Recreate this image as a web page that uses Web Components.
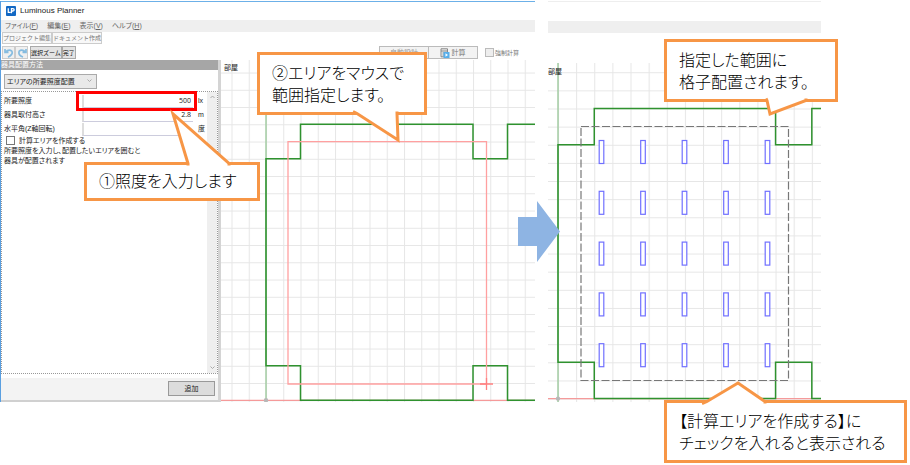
<!DOCTYPE html>
<html lang="ja">
<head>
<meta charset="utf-8">
<title>Luminous Planner</title>
<style>
body{margin:0;background:#fff;color:#222;font-family:"Liberation Sans","Noto Sans CJK JP",sans-serif}
</style>
</head>
<body>
<guide-page></guide-page>
<script>
const define = (name, html, setup) => {
  const t = document.createElement('template');
  t.innerHTML = '<style>*{box-sizing:border-box}button,input,select{font:inherit;color:inherit;margin:0;border-radius:0}</style>' + html;
  customElements.define(name, class extends HTMLElement {
    connectedCallback() {
      if (this.shadowRoot) return;
      this.attachShadow({mode: 'open'}).append(t.content.cloneNode(true));
      if (setup) setup(this, this.shadowRoot);
    }
  });
};

define('call-out', `<style>
:host{display:block;position:absolute;z-index:3;background:#fff;border:3px solid #f79646;padding:6px 12px;
font:16px/22px "Noto Sans CJK JP",sans-serif;font-weight:300;font-feature-settings:"palt";color:#000;white-space:nowrap}
svg{position:absolute;left:-3px;top:-3px;width:1px;height:1px;overflow:visible}
path{fill:#fff;stroke:#f79646;stroke-width:3;stroke-linejoin:miter}
</style><svg aria-hidden="true"><path/></svg><slot></slot>`,
(el, r) => r.querySelector('path').setAttribute('d', el.getAttribute('tail')));

define('title-bar', `<style>
:host{display:flex;align-items:center;gap:4px;height:20px;padding-left:5px;border-top:1px solid #6cb0e8;font:8px/12px "Liberation Sans",sans-serif;color:#222}
svg{width:10px;height:10px}
</style><svg viewBox="0 0 11 11" aria-hidden="true"><rect width="11" height="11" rx="1" fill="#1268c4"/><path d="M2.5 2.5v4.5h2.6M6 8V3h1.6q1.4 0 1.4 1.2T7.6 5.5H6" fill="none" stroke="#fff" stroke-width="1.4"/></svg><slot></slot>`);

define('menu-bar', `<style>
:host{display:flex;align-items:center;gap:9px;height:12px;padding-left:4px;background:#efefef;color:#666;font-size:7px;line-height:10px}
button{border:0;background:none;padding:0;white-space:nowrap;font-feature-settings:"palt"}
</style><button>ファイル(<u>F</u>)</button><button>編集(<u>E</u>)</button><button>表示(<u>V</u>)</button><button>ヘルプ(<u>H</u>)</button>`);

define('tool-rows', `<style>
:host{display:flex;flex-direction:column;gap:2px;height:28px;font-size:6px;line-height:10px}
.row{display:flex;height:12px;padding-left:1px}
.second{height:13px}
button{display:flex;align-items:center;justify-content:center;border:1px solid #aaa;background:#e3e3e3;padding:0;white-space:nowrap;color:#111}
.tab{background:#f8f8f8;border-color:#ccc;color:#777}
.ico{width:13px;background:#f0f0f0;border-color:#ccc}
.ico svg{width:10px;height:10px;flex:none}
.ico path{fill:none;stroke:#86bce0;stroke-width:1.7}
.gap{width:2px}
.right{display:flex;margin-left:auto;padding-right:16px}
.wide{width:50px;background:#f3f3f3;border-color:#bbb;color:#999;gap:1px;font-size:7px}
.wide+.wide{margin-left:-1px;color:#777}
.wide svg{width:10px;height:10px}
label{display:flex;align-items:center;gap:1px;margin-left:7px;color:#777}
input{appearance:none;width:9px;height:9px;border:1px solid #bbb;background:#eee}
</style>
<div class="row"><button class="tab">プロジェクト編集</button><button class="tab">ドキュメント作成</button></div>
<div class="row second">
<button class="ico" aria-label="元に戻す"><svg viewBox="0 0 10 10"><path d="M1 1v3.4h3.5M1.3 4.2Q5 .6 7.8 3.2Q9.5 6.3 4 9.2"/></svg></button>
<button class="ico" aria-label="やり直し"><svg viewBox="0 0 10 10"><path d="M9 1v3.4H5.5M8.7 4.2Q5 .6 2.2 3.2Q.8 7.4 6 9"/></svg></button>
<span class="gap"></span><button>選択ズーム</button><button>完了</button>
<div class="right"><button class="wide">自動設計</button>
<button class="wide"><svg viewBox="0 0 10 10" aria-hidden="true"><path d="M1 .8h6.5v8H1zM1 3h6.500M2.500 5h2M2.500 7h2" fill="#eee" stroke="#888"/><rect x="3.500" y="4" width="6" height="6" fill="#58aeea"/><path d="M5.500 5.300v3.400L8 7z" fill="#fff"/></svg>計算</button>
<label><input type="checkbox">強制計算</label></div></div>`);

define('side-panel', `<style>
:host{display:flex;flex-direction:column;width:220px;flex:none;border-right:3px solid #d4d4d4;border-bottom:2px solid #d0d0d0;font-size:7px;line-height:10px;font-feature-settings:"palt"}
h2{margin:0;font-size:7px;line-height:10px;font-weight:400;height:10px;background:#a6a6a6;color:#fff}
select{appearance:none;display:block;width:93px;height:15px;margin:4px 3px 2px;padding:0 2px;border:1px solid #aaa;background:#e9e9e9}
.pick{position:relative;width:max-content}
.pick svg{position:absolute;right:8px;top:9px;width:5px;height:4px}
.list{flex:1;display:flex;justify-content:space-between;border:1px dotted #999}
.fields{padding:2px 1px 2px 2px;flex:1}
.f{display:grid;grid-template-columns:73px 1fr 8px;align-items:center;height:14px;column-gap:5px}
.f input{width:100%;height:13px;border:0;border-left:2px solid #ddd;border-bottom:1px solid #ccd;text-align:right;padding:0 2px;background:#fff;font-family:"Open Sans","Noto Sans CJK JP",sans-serif}
.c{display:flex;align-items:center;gap:4px;padding-left:2px;height:9px}
.c input{appearance:none;width:9px;height:9px;border:1px solid #777;background:#fff}
p{margin:1px 0 0}
.bar{width:10px;background:#efefef;display:flex;flex-direction:column;justify-content:space-between;align-items:center;padding:3px 0}
.bar svg{width:5px;height:4px}
path{fill:none;stroke:#aaa}
footer{display:flex;justify-content:flex-end;margin-top:4px;background:#f3f3f3;padding:3px 3px 4px}
footer button{width:47px;height:15px;border:1px solid #999;background:#dcdcdc;padding:0}
</style><h2>器具配置方法</h2>
<div class="pick"><select aria-label="器具配置方法"><option>エリアの所要照度配置</option></select><svg viewBox="0 0 5 4"><path d="M.5.5l2 2 2-2"/></svg></div>
<div class="list"><div class="fields">
<label class="f"><span>所要照度</span><input value="500"><span>lx</span></label>
<label class="f"><span>器具取付高さ</span><input value="2.8"><span>m</span></label>
<label class="f"><span>水平角(Z軸回転)</span><input value=""><span>度</span></label>
<label class="c"><input type="checkbox">計算エリアを作成する</label>
<p>所要照度を入力し、配置したいエリアを囲むと<br>器具が配置されます</p></div>
<div class="bar"><svg viewBox="0 0 5 4"><path d="M.5 3l2-2 2 2"/></svg><svg viewBox="0 0 5 4"><path d="M.5.5l2 2 2-2"/></svg></div></div>
<footer><button>追加</button></footer>`);

/* Floor plan: ox/oy is the origin corner, step the grid pitch; the room is 16 cells high. */
define('floor-plan', `<style>
:host{display:block;position:relative;overflow:hidden;min-width:0;font-size:7px;line-height:10px;color:#111}
svg{display:block;width:100%}
span{position:absolute;top:3px;left:3px}
:host([kind=lamps]) span{left:0;top:4px}
</style><svg></svg><span>部屋</span>`,
(el, r) => {
  const n = k => +el.getAttribute(k), ox = n('ox'), oy = n('oy'), s = n('step'), h = n('h'), id = 'grid';
  const X = i => ox + i * s, Y = i => oy - i * s;
  let o = `<defs><pattern id="${id}" x="${ox}" y="${oy}" width="${s}" height="${s}" patternUnits="userSpaceOnUse"><path d="M.5 0V${s}M0 .5H${s}" stroke="#e6e6e6" stroke-width="1"/></pattern></defs>
  <rect width="100%" height="100%" fill="url(#${id})"/>
  <path d="M0 ${oy}H2000" stroke="#f59a9a" stroke-width="1.300"/><path d="M${ox} 0V${h}" stroke="#a3cda3" stroke-width="1.500"/>
  <path fill="none" stroke="#2f922f" stroke-width="1.500" d="M2000 ${Y(16)}H${X(14)}V${Y(14)}H${X(12)}V${Y(16)}H${X(2)}V${Y(14)}H${X(0)}V${Y(2)}H${X(2)}V${Y(0)}H${X(12)}V${Y(2)}H${X(14)}V${Y(0)}H2000"/>
  <circle cx="${ox}" cy="${oy}" r="2.200" fill="#b8b8b8"/>`;
  if (el.getAttribute('kind') === 'lamps') {
    o += '<rect x="33" y="63.500" width="207.500" height="254" fill="none" stroke="#777" stroke-width="1.200" stroke-dasharray="8 2.500"/>';
    for (let i = 0; i < 5; i++) for (let j = 0; j < 5; j++)
      o += `<rect x="${51.2 + i * 41.5}" y="${77.5 + j * 50.8}" width="4.600" height="23" fill="#fff" stroke="#7070ff" stroke-width="1.200"/>`;
  } else {
    o += '<path d="M67 81.700H265.500V324H67z" fill="none" stroke="#ffa0a0" stroke-width="1.300"/><path d="M259 324h13M265.500 318v12" stroke="#ff8080" stroke-width="1.300"/>';
  }
  const svg = r.querySelector('svg');
  svg.setAttribute('height', h);
  svg.innerHTML = o;
});

define('planner-window', `<style>
:host{display:block;min-width:0;border-left:1px solid #5a9fe0;margin-top:1px}
title-bar{height:19px}
.main{display:flex}
floor-plan{flex:1}
</style><title-bar>Luminous Planner</title-bar><menu-bar></menu-bar><tool-rows></tool-rows>
<div class="main"><side-panel></side-panel><floor-plan kind="area" ox="45" oy="340.3" step="17.25" h="342"></floor-plan></div>`);

define('result-view', `<style>
:host{display:block;min-width:0;border-top:1px solid #eee}
.band{height:12px;margin:19px 0 30px;background:#efefef}
</style><div class="band"></div><floor-plan kind="lamps" ox="10" oy="335.6" step="18.13" h="339"></floor-plan>`);

define('guide-page', `<style>
:host{display:block;position:relative;min-height:465px}
.views{display:grid;grid-template-columns:535fr 273fr;column-gap:13px;padding-right:89px;align-items:start}
result-view{margin-top:1px}
.arrow{position:absolute;z-index:2;left:518px;top:201px;width:42px;height:61px;fill:#8eb4e3}
.mark{position:absolute;z-index:2;left:76px;top:91px;width:121px;height:20px;border:3px solid #f00}
.c1{left:84px;top:162px;width:176px;padding:4px 12px 7px}
.c2{left:257px;top:52px;width:170px;padding-bottom:7px}
.c3{left:664px;top:39px;width:174px;padding-bottom:7px}
.c4{left:664px;top:400px;width:243px;padding-bottom:7px}
</style>
<div class="views"><planner-window></planner-window><result-view></result-view></div>
<svg class="arrow" viewBox="0 0 42 61" aria-hidden="true"><path d="M0 16H19V0L42 30.500 19 61V45H0z"/></svg>
<div class="mark"></div>
<call-out class="c1" tail="M104 3.500V1.500L89 -48 145 1.500V3.500">①照度を入力します</call-out>
<call-out class="c2" tail="M96 59.500L100 61.500 141 88 140 61.500V59.500">②エリアをマウスで<br>範囲指定します。</call-out>
<call-out class="c3" tail="M102 59.500L103 61.500 106 75 142 61.500V59.500">指定した範囲に<br>格子配置されます。</call-out>
<call-out class="c4" tail="M38 3.500L43 1.500 74 -17 101 1.500V3.500">【計算エリアを作成する】に<br>チェックを入れると表示される</call-out>`);
</script>
</body>
</html>
